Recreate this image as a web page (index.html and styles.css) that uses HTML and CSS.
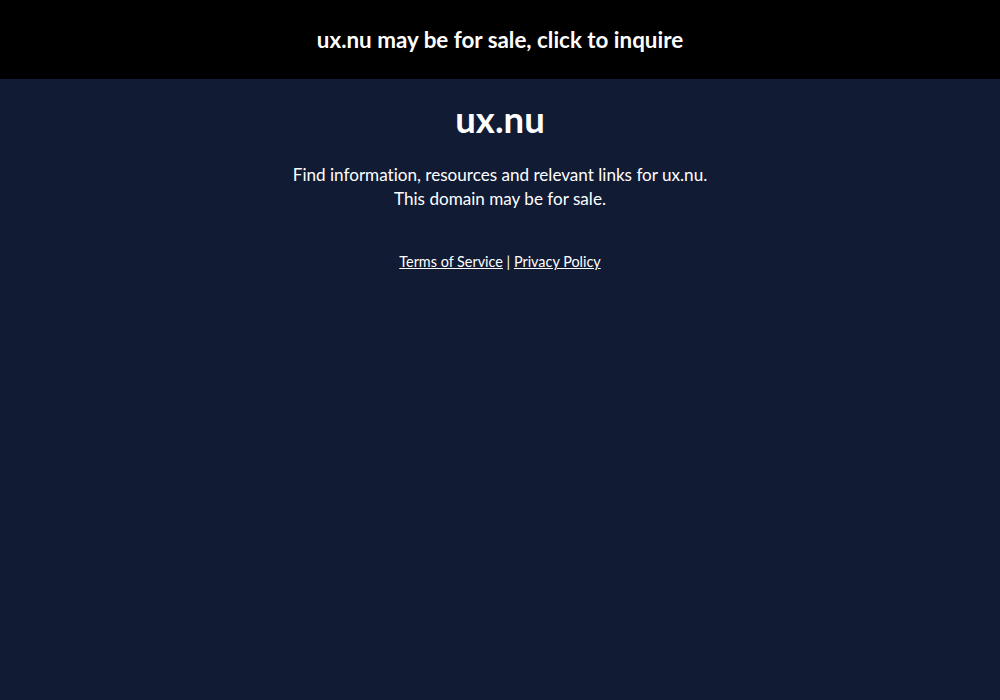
FILE: index.html
```html
<!DOCTYPE html>
<html>
<head>
<meta charset="utf-8">
<link rel="stylesheet" href="styles.css">
</head>
<body>
<header class="banner"><a class="banner-link" href="#">ux.nu may be for sale, click to inquire</a></header>
<main class="content">
<h1 class="title">ux.nu</h1>
<p class="lead">Find information, resources and relevant links for ux.nu.<br>This domain may be for sale.</p>
<p class="legal"><a href="#">Terms of Service</a> | <a href="#">Privacy Policy</a></p>
</main>
</body>
</html>
```

FILE: styles.css
```css
html, body {
  margin: 0;
  padding: 0;
  height: 100%;
}
body {
  background: #111b34;
  color: #ffffff;
  font-family: "Lato", "Noto Sans", sans-serif;
  font-variant-ligatures: none;
}
.banner {
  background: #000000;
  height: 79px;
  display: flex;
  align-items: center;
  justify-content: center;
}
.banner-link {
  color: #ffffff;
  text-decoration: none;
  font-weight: 700;
  font-size: 22.4px;
}
.content {
  text-align: center;
  padding-top: 18px;
}
.title {
  margin: 0;
  font-size: 36.5px;
  font-weight: 700;
  line-height: 44px;
}
.lead {
  margin: 22px 0 0;
  font-size: 17.1px;
  line-height: 24px;
}
.legal {
  margin: 41px 0 0;
  font-size: 14.4px;
  line-height: 20px;
}
.legal a {
  color: #ffffff;
}
```
